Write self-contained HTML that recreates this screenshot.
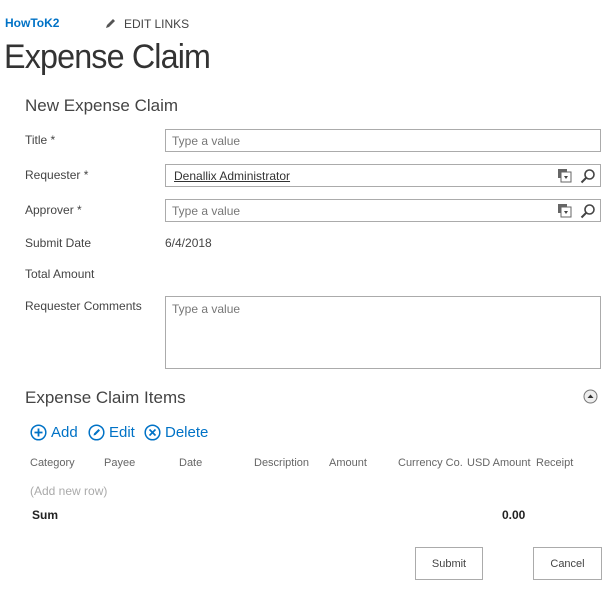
<!DOCTYPE html>
<html><head><style>
body{margin:0;width:611px;height:593px;background:#fff;font-family:"Liberation Sans",sans-serif;position:relative;overflow:hidden;color:#444}
.a{position:absolute;white-space:nowrap}
.lbl{font-size:12px;color:#444;left:25px}
.inp{position:absolute;left:165px;width:434px;border:1px solid #ababab;height:21px}
.ph{font-size:12px;color:#777;position:absolute;left:6px;top:4px}
.th{font-size:11px;color:#666;top:457px}
.btn{position:absolute;border:1px solid #ababab;height:31px;font-size:11px;color:#444;text-align:center;line-height:33px;top:547px}
.blue{color:#0072c6;font-size:15px}
</style></head><body>
<div class="a" style="left:5px;top:16px;font-size:12px;font-weight:bold;color:#0072c6">HowToK2</div>
<svg class="a" style="left:105px;top:17px" width="12" height="12" viewBox="0 0 12 12"><path d="M1 11 L2 8 L8 2 L10 4 L4 10 Z" fill="#555"/></svg>
<div class="a" style="left:124px;top:17px;font-size:12px;color:#444">EDIT LINKS</div>
<div class="a" style="left:4px;top:38px;font-size:34px;color:#333;letter-spacing:-0.9px;transform:scaleX(0.95);transform-origin:left">Expense Claim</div>
<div class="a" style="left:25px;top:96px;font-size:17px;color:#444">New Expense Claim</div>

<div class="a lbl" style="top:133px">Title *</div>
<div class="inp" style="top:129px"><span class="ph">Type a value</span></div>
<div class="a lbl" style="top:168px">Requester *</div>
<div class="inp" style="top:164px"><span class="ph" style="color:#333;left:8px;text-decoration:underline">Denallix Administrator</span>
<svg style="position:absolute;right:28px;top:4px" width="14" height="14" viewBox="0 0 14 14"><rect x="0" y="0" width="9" height="9" fill="#666"/><rect x="3" y="3" width="10" height="10" fill="#fff" stroke="#666"/><path d="M6 7 L10 7 L8 10Z" fill="#444"/></svg>
<svg style="position:absolute;right:4px;top:3px" width="16" height="16" viewBox="0 0 16 16"><circle cx="9.5" cy="6.5" r="4.5" fill="none" stroke="#444" stroke-width="1.6"/><path d="M6.5 9.5 L1.5 14.5" stroke="#444" stroke-width="2"/></svg></div>
<div class="a lbl" style="top:203px">Approver *</div>
<div class="inp" style="top:199px"><span class="ph">Type a value</span>
<svg style="position:absolute;right:28px;top:4px" width="14" height="14" viewBox="0 0 14 14"><rect x="0" y="0" width="9" height="9" fill="#666"/><rect x="3" y="3" width="10" height="10" fill="#fff" stroke="#666"/><path d="M6 7 L10 7 L8 10Z" fill="#444"/></svg>
<svg style="position:absolute;right:4px;top:3px" width="16" height="16" viewBox="0 0 16 16"><circle cx="9.5" cy="6.5" r="4.5" fill="none" stroke="#444" stroke-width="1.6"/><path d="M6.5 9.5 L1.5 14.5" stroke="#444" stroke-width="2"/></svg></div>
<div class="a lbl" style="top:236px">Submit Date</div>
<div class="a" style="left:165px;top:236px;font-size:12px">6/4/2018</div>
<div class="a lbl" style="top:267px">Total Amount</div>
<div class="a lbl" style="top:299px">Requester Comments</div>
<div class="inp" style="top:296px;height:71px"><span class="ph" style="top:5px">Type a value</span></div>

<div class="a" style="left:25px;top:388px;font-size:17px;color:#444">Expense Claim Items</div>
<svg class="a" style="left:583px;top:389px" width="15" height="15" viewBox="0 0 15 15"><circle cx="7.5" cy="7.5" r="6.5" fill="#eee" stroke="#777"/><path d="M4.5 9 L7.5 5.5 L10.5 9Z" fill="#333"/></svg>
<svg class="a" style="left:30px;top:424px" width="17" height="17" viewBox="0 0 17 17"><circle cx="8.5" cy="8.5" r="7.3" fill="none" stroke="#0072c6" stroke-width="1.5"/><path d="M8.5 4.5V12.5M4.5 8.5H12.5" stroke="#0072c6" stroke-width="1.8"/></svg>
<div class="a blue" style="left:51px;top:424px">Add</div>
<svg class="a" style="left:88px;top:424px" width="17" height="17" viewBox="0 0 17 17"><circle cx="8.5" cy="8.5" r="7.3" fill="none" stroke="#0072c6" stroke-width="1.5"/><path d="M5.5 11.5 L6 9.5 L10.5 5 L12 6.5 L7.5 11Z" fill="#0072c6"/></svg>
<div class="a blue" style="left:109px;top:424px">Edit</div>
<svg class="a" style="left:144px;top:424px" width="17" height="17" viewBox="0 0 17 17"><circle cx="8.5" cy="8.5" r="7.3" fill="none" stroke="#0072c6" stroke-width="1.5"/><path d="M5.5 5.5L11.5 11.5M11.5 5.5L5.5 11.5" stroke="#0072c6" stroke-width="1.6"/></svg>
<div class="a blue" style="left:165px;top:424px">Delete</div>

<div class="a th" style="left:30px">Category</div>
<div class="a th" style="left:104px">Payee</div>
<div class="a th" style="left:179px">Date</div>
<div class="a th" style="left:254px">Description</div>
<div class="a th" style="left:329px">Amount</div>
<div class="a th" style="left:398px">Currency Co.</div>
<div class="a th" style="left:467px">USD Amount</div>
<div class="a th" style="left:536px">Receipt</div>
<div class="a" style="left:30px;top:484px;font-size:12px;color:#aaa">(Add new row)</div>
<div class="a" style="left:32px;top:508px;font-size:12px;font-weight:bold;color:#222">Sum</div>
<div class="a" style="left:502px;top:508px;font-size:12px;font-weight:bold;color:#222">0.00</div>

<div class="btn" style="left:415px;width:66px">Submit</div>
<div class="btn" style="left:533px;width:67px">Cancel</div>
</body></html>
